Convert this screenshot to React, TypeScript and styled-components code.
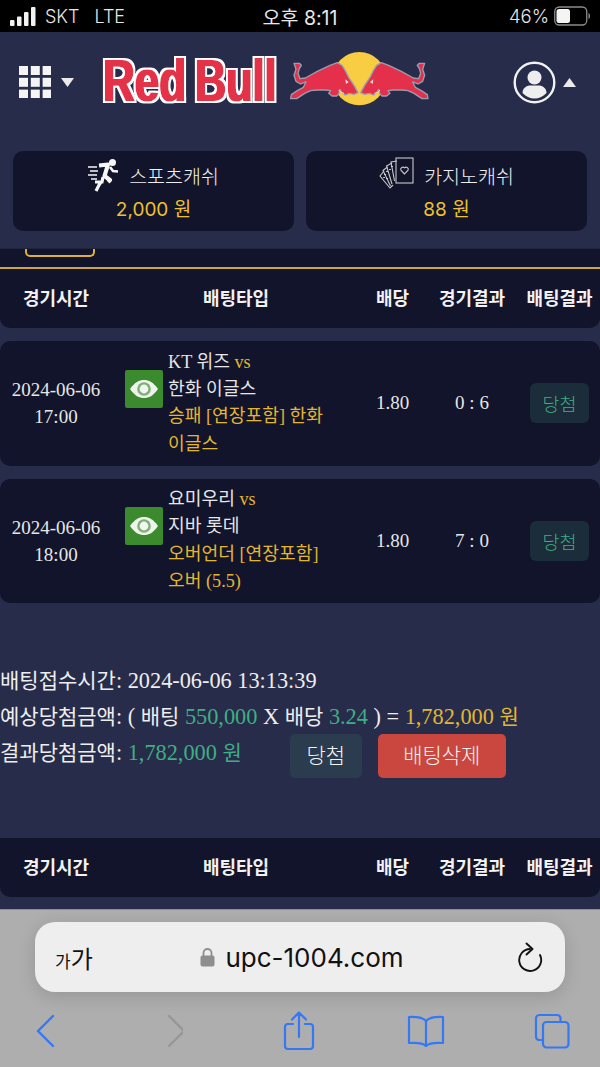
import React from 'react';
import styled, { createGlobalStyle } from 'styled-components';

const GlobalStyle = createGlobalStyle`
  html, body {
    margin: 0;
    padding: 0;
    background: #272c4a;
  }
  * {
    box-sizing: border-box;
  }
`;

const serif = `"Liberation Serif", "Noto Sans CJK KR", serif`;
const sans = `"Inter", "Noto Sans CJK KR", sans-serif`;

const Screen = styled.div`
  width: 600px;
  height: 1067px;
  display: flex;
  flex-direction: column;
  overflow: hidden;
  background: #272c4a;
  font-family: ${serif};
  color: #eeeeee;
`;

// ---- ios status bar
const StatusBar = styled.div`
  height: 32px;
  flex: none;
  background: #000;
  color: #e8e8e8;
  font-family: ${sans};
  display: grid;
  grid-template-columns: 1fr auto 1fr;
  align-items: center;
  padding: 0 10px;
`;

const StatusLeft = styled.div`
  display: flex;
  align-items: center;
  gap: 8px;
  font-size: 18px;
  font-weight: 300;
`;

const Carrier = styled.span`
  margin-right: 7px;
`;

const StatusRight = styled.div`
  display: flex;
  justify-content: flex-end;
  align-items: center;
  gap: 5px;
  font-size: 18.500px;
  font-weight: 300;
`;

const Clock = styled.div`
  font-size: 19.500px;
`;

// ---- site header
const SiteHeader = styled.div`
  height: 217px;
  flex: none;
  display: flex;
  flex-direction: column;
  background: #272c4a;
  border-bottom: 1px solid #20243e;
`;

const LogoBar = styled.div`
  height: 119px;
  flex: none;
  display: flex;
  align-items: flex-start;
  padding: 20px 24px 0 19px;
`;

const MenuButton = styled.div`
  display: flex;
  align-items: center;
  gap: 10px;
  margin-top: 14px;
  width: 81px;
`;

const LogoWrap = styled.div`
  display: flex;
  align-items: center;
  flex: 1;
  margin-top: -8px;
`;

const UserButton = styled.div`
  display: flex;
  align-items: center;
  gap: 7px;
  margin-top: 9px;
`;

const Wallets = styled.div`
  display: grid;
  grid-template-columns: 281px 281px;
  gap: 12px;
  padding: 0 13px;
`;

const Wallet = styled.div`
  height: 80px;
  border-radius: 10px;
  background: #11142b;
  display: flex;
  flex-direction: column;
  align-items: center;
  padding-top: 6px;
  font-family: ${sans};
`;

const WalletTitle = styled.div`
  display: flex;
  align-items: center;
  gap: 9px;
  font-size: 19.500px;
  font-weight: 300;
  height: 36px;
  color: #f0f0f0;
`;

const WalletAmount = styled.div`
  font-size: 19px;
  color: #efc030;
  margin-top: 4px;
  line-height: 26px;
`;

// ---- betting list
const Content = styled.div`
  flex: 1;
  min-height: 0;
  overflow: hidden;
`;

const HeadPanel = styled.div<{ $clipped?: boolean }>`
  background: #11142b;
  border-radius: 0 0 10px 10px;
  height: ${(p) => (p.$clipped ? '79px' : '59px')};
  display: flex;
  flex-direction: column;
`;

const TabStub = styled.div`
  height: 20px;
  flex: none;
  border-bottom: 2px solid #cfa63a;
  padding-left: 25px;
`;

const TabOutline = styled.div`
  width: 70px;
  height: 8px;
  border: 2px solid #dcb03a;
  border-top: none;
  border-radius: 0 0 5px 5px;
`;

const columns = '112px 248px 65px 94px 81px';

const HeadRow = styled.div`
  flex: 1;
  display: grid;
  grid-template-columns: ${columns};
  align-items: center;
  padding-bottom: 4px;
  text-align: center;
  font-family: ${sans};
  font-size: 18px;
  font-weight: 700;
  color: #f2f2f2;
`;

const BetRow = styled.div`
  height: 124.5px;
  margin-top: 13px;
  border-radius: 10px;
  background: #11142b;
  display: grid;
  grid-template-columns: ${columns};
  align-items: center;
  text-align: center;
  font-size: 19px;
  color: #e6e6e6;
`;

const DateCell = styled.div`
  line-height: 27px;
`;

const GameCell = styled.div`
  display: flex;
  align-items: flex-start;
  text-align: left;
  padding-left: 13px;
  gap: 5px;
`;

const EyeBox = styled.div`
  flex: none;
  width: 38px;
  height: 38px;
  margin-top: 21px;
  border-radius: 2px;
  background: #3c8a2e;
  display: flex;
  align-items: center;
  justify-content: center;
`;

const GameText = styled.div`
  font-size: 18.200px;
  line-height: 27.300px;
  width: 175px;
`;

const Gold = styled.span`
  color: #e3b62f;
`;

const Green = styled.span`
  color: #3fae84;
`;

const ResultBadge = styled.div`
  width: 59px;
  height: 40px;
  margin-left: 11px;
  border-radius: 6px;
  background: #1b2c3a;
  color: #3fae84;
  font-family: ${sans};
  font-size: 18.500px;
  font-weight: 300;
  display: flex;
  align-items: center;
  justify-content: center;
`;

const Summary = styled.div`
  margin-top: 60px;
  margin-bottom: 59px;
  font-size: 22.300px;
  line-height: 36px;
  height: 116px;
`;

const SummaryLine = styled.div`
  white-space: nowrap;
  display: flex;
  align-items: flex-start;
`;

const Txt = styled.span`
  white-space: pre;
`;

// korean runs in the original are a bit narrower than the latin ones
const Ko = styled.span`
  font-size: 21px;
`;

const ActionButton = styled.div<{ $danger?: boolean }>`
  height: 44px;
  width: ${(p) => (p.$danger ? '128px' : '72px')};
  margin-left: ${(p) => (p.$danger ? '16px' : '48px')};
  margin-top: -1px;
  flex: none;
  border-radius: 5px;
  background: ${(p) => (p.$danger ? '#c9473f' : '#2a3c4e')};
  color: #f2f2f2;
  font-family: ${sans};
  font-size: 21px;
  font-weight: 300;
  display: flex;
  align-items: center;
  justify-content: center;
`;

// ---- safari bottom bar
const SafariBar = styled.div`
  height: 158px;
  flex: none;
  background: #aeaeae;
  border-top: 1px solid #8d8d8f;
  padding-top: 12px;
  font-family: ${sans};
`;

const AddressPill = styled.div`
  height: 70px;
  margin: 0 35px;
  border-radius: 20px;
  background: #eeeeee;
  box-shadow: 0 4px 18px rgba(0, 0, 0, 0.14);
  display: grid;
  grid-template-columns: 1fr auto 1fr;
  align-items: center;
  padding: 0 22px 0 20px;
  color: #111;
`;

const AaLabel = styled.div`
  font-size: 24px;
  font-weight: 400;
  display: flex;
  align-items: baseline;
`;

const SmallAa = styled.span`
  font-size: 17px;
`;

const Url = styled.div`
  display: flex;
  align-items: center;
  gap: 10px;
  font-size: 26px;
  font-weight: 400;
  margin-left: 6px;
`;

const ReloadWrap = styled.div`
  display: flex;
  justify-content: flex-end;
`;

const NavIcons = styled.div`
  display: grid;
  grid-template-columns: repeat(5, 40px);
  justify-content: space-between;
  justify-items: center;
  align-items: center;
  margin-top: 19px;
  padding: 0 28px 0 26px;
`;

const GridIcon = () => (
  <svg width="32" height="32" viewBox="0 0 32 32" fill="#f4f4f4">
    {[0, 1, 2].map((r) =>
      [0, 1, 2].map((c) => <rect key={`${r}${c}`} x={c * 11.8} y={r * 11.8} width="9" height="9" />)
    )}
  </svg>
);

const Caret = ({ up, color = '#eaeaea' }: { up?: boolean; color?: string }) => (
  <svg width="13" height="9" viewBox="0 0 13 9" fill={color}>
    <path d={up ? 'M6.5 0 13 9H0z' : 'M0 0h13L6.5 9z'} />
  </svg>
);

const UserIcon = () => (
  <svg width="43" height="43" viewBox="0 0 43 43">
    <circle cx="21.5" cy="21.5" r="19.8" fill="none" stroke="#f2f2f2" strokeWidth="2.4" />
    <circle cx="21.5" cy="16.5" r="7" fill="#eeeeee" />
    <path d="M9.5 32c0-5 4-7.5 8-7.5h8c4 0 8 2.500 8 7.500-3 3.500-7.500 5.500-12 5.500s-9-2-12-5.500z" fill="#eeeeee" />
  </svg>
);

const bullPath =
  'M42 70 L58 70 L64 76 L58 86 L54 100 L60 116 L76 114 L112 94 L150 76 L172 68 L186 76 L196 92 L206 112 L222 136 L234 158 L222 163 L208 160 L196 165 L186 158 L180 148 L176 162 L170 168 L156 168 L146 160 L152 152 L136 150 L112 150 L92 152 L74 160 L50 176 L32 176 L34 164 L52 152 L70 142 L78 126 L62 132 L48 124 L42 106 L48 88 Z';

const RedBullLogo = () => (
  <svg width="335" height="76" viewBox="0 -8 335 76">
    <defs>
      <filter id="logoOutline" x="-5%" y="-10%" width="110%" height="120%">
        <feMorphology in="SourceGraphic" operator="dilate" radius="0.6 0.4" result="fat" />
        <feMorphology in="fat" operator="dilate" radius="2" result="edge" />
        <feFlood floodColor="#ffffff" />
        <feComposite in2="edge" operator="in" result="white" />
        <feMerge>
          <feMergeNode in="white" />
          <feMergeNode in="fat" />
        </feMerge>
      </filter>
    </defs>
    <g filter="url(#logoOutline)" fontFamily='"Liberation Sans", sans-serif' fontWeight="700" fontSize="44" fill="#e4304a">
      <text transform="translate(3 49) scale(1 1.36)">Red</text>
      <text transform="translate(95 49) scale(0.98 1.36)">Bull</text>
    </g>
    <g transform="translate(180 -12) scale(0.3333)">
      <circle cx="238" cy="116" r="80" fill="#f8cd42" />
      <path d={bullPath} fill="#e4304a" stroke="#9a9db0" strokeWidth="4" strokeLinejoin="round" />
      <path d={bullPath} transform="translate(476 0) scale(-1 1)" fill="#e4304a" stroke="#9a9db0" strokeWidth="4" strokeLinejoin="round" />
      <path d="M196 118 l10 8 -8 6z M280 118 l-10 8 8 6z" fill="#f3d7dc" />
      <path d="M176 150 q6 10 16 10 M300 150 q-6 10 -16 10" fill="none" stroke="#f3d7dc" strokeWidth="3" />
    </g>
  </svg>
);

const RunnerIcon = () => (
  <svg width="32" height="34" viewBox="0 0 32 34" fill="none" stroke="#f6f6f6">
    <circle cx="24.500" cy="4.500" r="3.500" fill="#f6f6f6" stroke="none" />
    <path d="M11 7.500 L20 6.500 L16.500 18 L22 22 L20 24" strokeWidth="4.200" strokeLinejoin="round" />
    <path d="M22 9 L25 13 L30 13.500" strokeWidth="2.600" />
    <path d="M15 19 L14 24 L7 24 L13 24 L11 27 L8 33" strokeWidth="3.200" />
    <path d="M0 9h9M2 13h8M0 17h9M3 21h6" strokeWidth="1.700" />
  </svg>
);

const CardsIcon = () => (
  <svg width="36" height="36" viewBox="0 0 36 36" fill="none" stroke="#c8c8c8" strokeWidth="1.100">
    <rect x="17" y="1" width="17" height="25" />
    <path d="M25.500 17 l-3.600-3.800 a2.200 2.200 0 0 1 3.600-2.400 a2.200 2.200 0 0 1 3.600 2.400z" />
    <path d="M18 4 L12 5 L15.500 24" />
    <path d="M13 6 L7.500 9 L13 27" />
    <path d="M8.500 10 L4 13.500 L11.500 29" />
    <path d="M5 14 L1 19 L11 31 L14 28" />
    <path d="M13 9v1M11 12v1M8 14v1M6 17v1M5 20v1M8 21v1" stroke="#e8e8e8" strokeWidth="1.600" />
  </svg>
);

const EyeIcon = () => (
  <svg width="30" height="20" viewBox="0 0 30 20">
    <path d="M1 10 C6 3 10 1 15 1 S24 3 29 10 C24 17 20 19 15 19 S6 17 1 10z" fill="#eef3ec" />
    <circle cx="15" cy="10" r="6.800" fill="#7fae76" />
    <circle cx="15" cy="10" r="4.400" fill="#f2f6f0" />
  </svg>
);

const SignalIcon = () => (
  <svg width="27" height="19" viewBox="0 0 27 19" fill="#f2f2f2">
    <rect x="0" y="13" width="4.500" height="6" rx="1" />
    <rect x="7" y="9.500" width="4.500" height="9.500" rx="1" />
    <rect x="14" y="5" width="4.500" height="14" rx="1" />
    <rect x="21" y="0" width="4.500" height="19" rx="1" />
  </svg>
);

const BatteryIcon = () => (
  <svg width="36" height="20" viewBox="0 0 36 20">
    <rect x="0.750" y="1" width="32" height="18" rx="4.500" fill="none" stroke="#8c8c8c" strokeWidth="1.300" />
    <rect x="2.500" y="3" width="13.500" height="14" rx="2.500" fill="#f4f4f4" />
    <path d="M34.500 7v6c1-.4 1.500-1.500 1.500-3s-.5-2.600-1.500-3z" fill="#8c8c8c" />
  </svg>
);

const LockIcon = () => (
  <svg width="15" height="20" viewBox="0 0 15 20">
    <path d="M3.500 9V6a4 4 0 0 1 8 0v3" fill="none" stroke="#8e8e8e" strokeWidth="1.800" />
    <rect x="0.500" y="8.500" width="14" height="11" rx="2" fill="#8e8e8e" />
  </svg>
);

const ReloadIcon = () => (
  <svg width="26" height="30" viewBox="0 0 26 30" fill="none" stroke="#111" strokeWidth="1.900" strokeLinecap="round" strokeLinejoin="round">
    <path d="M13 7 A11 11 0 1 0 23 13" />
    <path d="M9.500 1.500 L15.500 7 L9.500 12.500" />
  </svg>
);

const blue = '#3478f6';

const BackIcon = () => (
  <svg width="20" height="34" viewBox="0 0 20 34" fill="none" stroke={blue} strokeWidth="2.400" strokeLinecap="round" strokeLinejoin="round">
    <path d="M17 2 L2 17 L17 32" />
  </svg>
);

const ForwardIcon = () => (
  <svg width="20" height="34" viewBox="-3 0 20 34" fill="none" stroke="#979797" strokeWidth="2.400" strokeLinecap="round" strokeLinejoin="round">
    <path d="M3 2 L18 17 L3 32" />
  </svg>
);

const ShareIcon = () => (
  <svg width="32" height="40" viewBox="0 0 32 40" fill="none" stroke={blue} strokeWidth="2.200" strokeLinecap="round" strokeLinejoin="round">
    <path d="M10 13H5a3 3 0 0 0-3 3v19a3 3 0 0 0 3 3h22a3 3 0 0 0 3-3V16a3 3 0 0 0-3-3h-5" />
    <path d="M16 26V2M9 8.500 16 1.500l7 7" />
  </svg>
);

const BookIcon = () => (
  <svg width="38" height="32" viewBox="0 0 38 32" fill="none" stroke={blue} strokeWidth="2.200" strokeLinecap="round" strokeLinejoin="round">
    <path d="M19 6C16 2.500 11 1.500 2 2v26c8-.5 14 0 17 3 3-3 9-3.500 17-3V2c-9-.5-14 .5-17 4z" />
    <path d="M19 6v25" />
  </svg>
);

const TabsIcon = () => (
  <svg width="36" height="36" viewBox="0 0 36 36" fill="none" stroke={blue} strokeWidth="2.200" strokeLinejoin="round">
    <path d="M8 27H5a3.500 3.500 0 0 1-3-3V5a3.500 3.500 0 0 1 3-3h18a3.500 3.500 0 0 1 3.500 3v3" />
    <rect x="9" y="9" width="25.500" height="25.500" rx="3.500" />
  </svg>
);

type Bet = {
  date: string;
  time: string;
  home: string;
  away: string;
  market: string;
  pick: string;
  odds: string;
  score: string;
};

const bets: Bet[] = [
  {
    date: '2024-06-06',
    time: '17:00',
    home: 'KT 위즈',
    away: '한화 이글스',
    market: '승패 [연장포함] 한화',
    pick: '이글스',
    odds: '1.80',
    score: '0 : 6',
  },
  {
    date: '2024-06-06',
    time: '18:00',
    home: '요미우리',
    away: '지바 롯데',
    market: '오버언더 [연장포함]',
    pick: '오버 (5.5)',
    odds: '1.80',
    score: '7 : 0',
  },
];

const TableHead = () => (
  <HeadRow>
    <div>경기시간</div>
    <div>배팅타입</div>
    <div>배당</div>
    <div>경기결과</div>
    <div>배팅결과</div>
  </HeadRow>
);

export default function App() {
  return (
    <Screen>
      <GlobalStyle />
      <StatusBar>
        <StatusLeft>
          <SignalIcon />
          <Carrier>SKT</Carrier>
          <span>LTE</span>
        </StatusLeft>
        <Clock>오후 8:11</Clock>
        <StatusRight>
          <span>46%</span>
          <BatteryIcon />
        </StatusRight>
      </StatusBar>

      <SiteHeader>
        <LogoBar>
          <MenuButton>
            <GridIcon />
            <Caret />
          </MenuButton>
          <LogoWrap>
            <RedBullLogo />
          </LogoWrap>
          <UserButton>
            <UserIcon />
            <Caret up />
          </UserButton>
        </LogoBar>
        <Wallets>
          <Wallet>
            <WalletTitle>
              <RunnerIcon />
              스포츠캐쉬
            </WalletTitle>
            <WalletAmount>2,000 원</WalletAmount>
          </Wallet>
          <Wallet>
            <WalletTitle>
              <CardsIcon />
              카지노캐쉬
            </WalletTitle>
            <WalletAmount>88 원</WalletAmount>
          </Wallet>
        </Wallets>
      </SiteHeader>

      <Content>
        <HeadPanel $clipped>
          <TabStub>
            <TabOutline />
          </TabStub>
          <TableHead />
        </HeadPanel>

        {bets.map((bet) => (
          <BetRow key={bet.time}>
            <DateCell>
              {bet.date}
              <br />
              {bet.time}
            </DateCell>
            <GameCell>
              <EyeBox>
                <EyeIcon />
              </EyeBox>
              <GameText>
                {bet.home} <Gold>vs</Gold>
                <br />
                {bet.away}
                <br />
                <Gold>
                  {bet.market}
                  <br />
                  {bet.pick}
                </Gold>
              </GameText>
            </GameCell>
            <div>{bet.odds}</div>
            <div>{bet.score}</div>
            <ResultBadge>당첨</ResultBadge>
          </BetRow>
        ))}

        <Summary>
          <SummaryLine>
            <Txt>
              <Ko>배팅접수시간</Ko>: 2024-06-06 13:13:39
            </Txt>
          </SummaryLine>
          <SummaryLine>
            <Txt>
              <Ko>예상당첨금액</Ko>: ( <Ko>배팅</Ko> <Green>550,000</Green> X <Ko>배당</Ko> <Green>3.24</Green> ) = <Gold>1,782,000 <Ko>원</Ko></Gold>
            </Txt>
          </SummaryLine>
          <SummaryLine>
            <Txt>
              <Ko>결과당첨금액</Ko>: <Green>1,782,000 <Ko>원</Ko></Green>
            </Txt>
            <ActionButton>당첨</ActionButton>
            <ActionButton $danger>배팅삭제</ActionButton>
          </SummaryLine>
        </Summary>

        <HeadPanel>
          <TableHead />
        </HeadPanel>
      </Content>

      <SafariBar>
        <AddressPill>
          <AaLabel>
            <SmallAa>가</SmallAa>가
          </AaLabel>
          <Url>
            <LockIcon />
            upc-1004.com
          </Url>
          <ReloadWrap>
            <ReloadIcon />
          </ReloadWrap>
        </AddressPill>
        <NavIcons>
          <BackIcon />
          <ForwardIcon />
          <ShareIcon />
          <BookIcon />
          <TabsIcon />
        </NavIcons>
      </SafariBar>
    </Screen>
  );
}
